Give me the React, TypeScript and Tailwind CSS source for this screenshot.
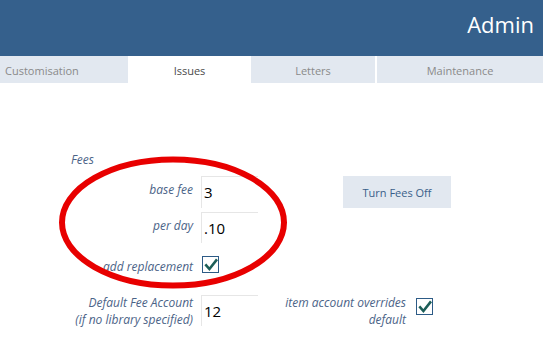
import React from "react";

const Check = () => (
  <div className="w-[17px] h-[17px] border-[1.5px] border-[#2d5b86] bg-white flex items-center justify-center">
    <svg width="14" height="14" viewBox="0 0 14 14">
      <path d="M2.2 7.4 L5.4 11 L12.2 2.4" fill="none" stroke="#1c5e58" strokeWidth="2.6" strokeLinecap="square" strokeLinejoin="miter" />
    </svg>
  </div>
);

const Field = ({ value, h }: { value: string; h: string }) => (
  <div className={`ml-[8px] w-[57px] ${h} border-t border-l border-[#e6e6e6] pl-[2px] text-[15px] leading-[30px] text-black not-italic`}>
    {value}
  </div>
);

const App = () => {
  return (
    <div className="relative w-[543px] h-[360px] overflow-hidden bg-white font-['Open_Sans',sans-serif]">
      <div className="h-[56px] bg-[#35608c] flex justify-end pt-[9px] pr-[9px]">
        <span className="text-white text-[22px] leading-[30px]">Admin</span>
      </div>

      <div className="flex h-[27px] text-[11px] leading-[15px]">
        <div className="w-[128px] bg-[#e2e8f0] text-[#8a8a8a] pl-[5px] flex items-center pt-[1px]">Customisation</div>
        <div className="w-[123px] bg-white text-[#4a4a4a] flex items-center justify-center pt-[1px]">Issues</div>
        <div className="w-[124px] bg-[#e2e8f0] text-[#8a8a8a] flex items-center justify-center pt-[1px]">Letters</div>
        <div className="ml-[2px] flex-1 bg-[#e2e8f0] text-[#8a8a8a] flex items-center justify-center pt-[1px]">Maintenance</div>
      </div>

      <div className="text-[12px] italic text-[#4b6387]">
        <div className="mt-[69px] pl-[71px] leading-[16px]">Fees</div>

        <div className="mt-[8px] flex items-start">
          <div className="w-[193px] text-right leading-[16px] pt-[6px]">base fee</div>
          <Field value="3" h="h-[32px]" />
          <button className="ml-[85px] w-[108px] h-[32px] bg-[#e2e8f0] text-[#3a5f8a] not-italic text-[11px] pt-[2px]">
            Turn Fees Off
          </button>
        </div>

        <div className="mt-[4px] flex items-start">
          <div className="w-[193px] text-right leading-[16px] pt-[6px]">per day</div>
          <Field value=".10" h="h-[31px]" />
        </div>

        <div className="mt-[13px] flex items-start">
          <div className="w-[193px] text-right leading-[16px] pt-[3px]">add replacement</div>
          <div className="ml-[9px]">
            <Check />
          </div>
        </div>

        <div className="mt-[20px] flex items-start">
          <div className="w-[193px] text-right leading-[16.5px]">
            Default Fee Account
            <br />
            (if no library specified)
          </div>
          <Field value="12" h="h-[31px]" />
          <div className="w-[148px] text-right leading-[16.5px]">
            item account overrides
            <br />
            default
          </div>
          <div className="ml-[10px] mt-[3px]">
            <Check />
          </div>
        </div>
      </div>

      <svg className="absolute inset-0 pointer-events-none" width="543" height="360">
        <ellipse cx="173" cy="222.5" rx="111" ry="63" fill="none" stroke="#e80000" strokeWidth="6" />
      </svg>
    </div>
  );
};

export default App;
